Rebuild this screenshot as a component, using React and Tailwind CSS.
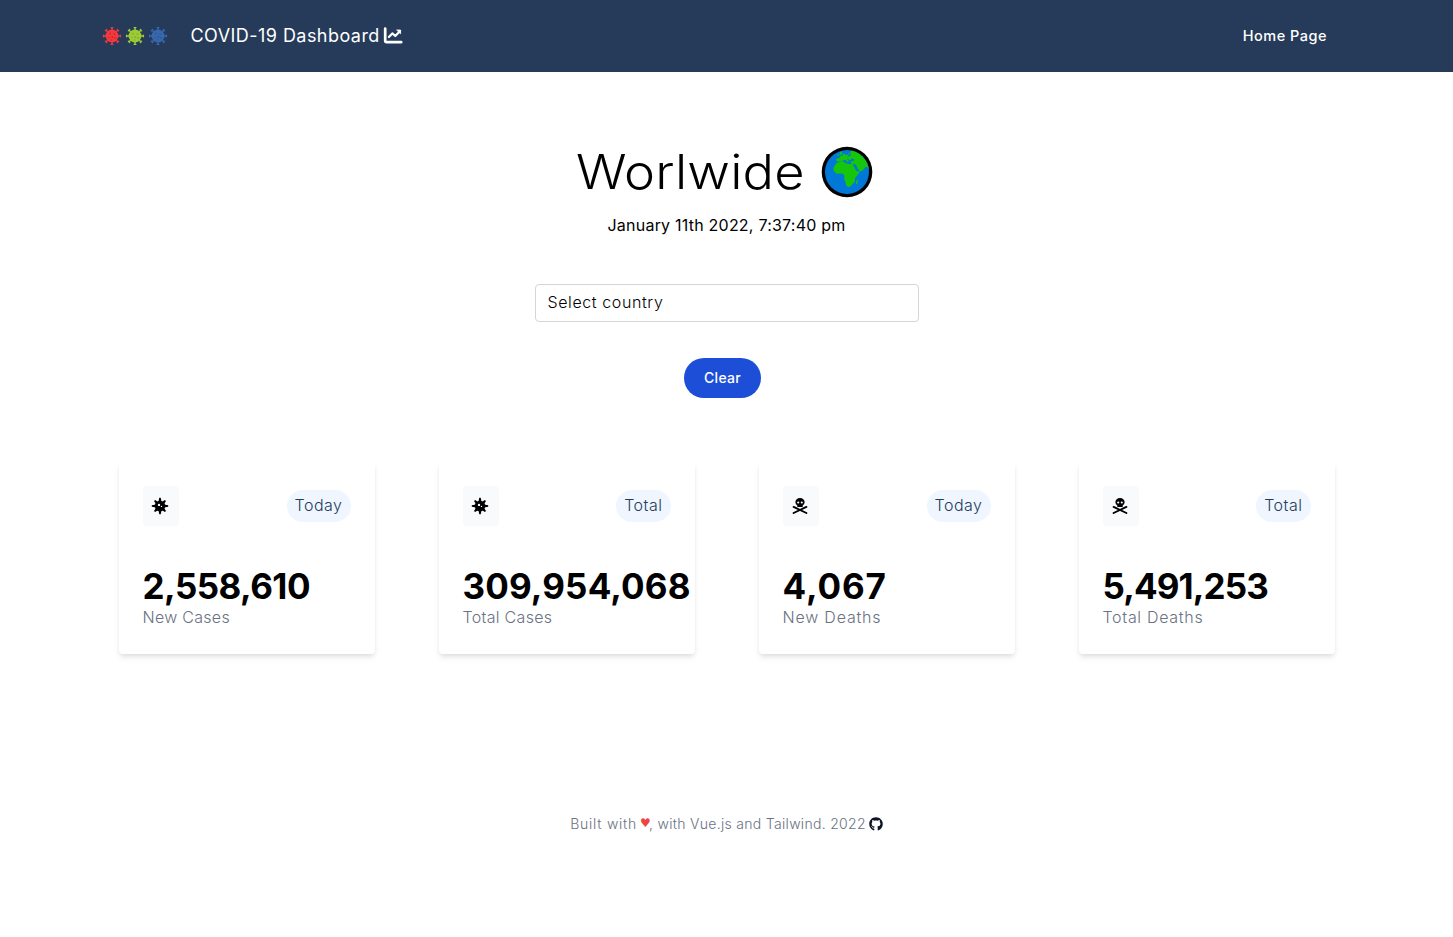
import React from "react";
import { FaGithub } from "react-icons/fa";

function LogoVirus({ color, dark }) {
  return (
    <svg viewBox="-0.5 -0.5 21 21" className="h-5 w-5">
      <g stroke={color} strokeWidth="1.5" strokeLinecap="round">
        {[0, 45, 90, 135, 180, 225, 270, 315].map((a) => (
          <path key={a} d="M10 5V1.4M9.1 1.2h1.8" transform={`rotate(${a} 10 10)`} />
        ))}
      </g>
      <circle cx="10" cy="10" r="6.8" fill={color} />
      <g fill={dark}>
        <circle cx="8" cy="7.5" r="1" />
        <circle cx="12.5" cy="8" r="0.9" />
        <circle cx="10.3" cy="11" r="1" />
        <circle cx="6.8" cy="11.5" r="0.8" />
        <circle cx="13.3" cy="12" r="1" />
        <circle cx="9.5" cy="14.2" r="0.8" />
      </g>
    </svg>
  );
}

function ChartIcon() {
  return (
    <svg viewBox="0 0 20 18" className="h-[18px] w-5" fill="none" stroke="white" strokeLinecap="round" strokeLinejoin="round">
      <path d="M2.2 1.7v12.1q0 1.4 1.4 1.4h14.6" strokeWidth="2.7" />
      <path d="M5.9 10l3.4-3.6 3 2.6 4.6-4.7" strokeWidth="2.2" />
      <path d="M14 3h3.6v3.4z" fill="white" strokeWidth="0.8" />
    </svg>
  );
}

function VirusIcon() {
  return (
    <svg viewBox="0 0 20 20" className="h-5 w-5">
      <g fill="black">
        {[0, 90, 180, 270].map((a) => (
          <path key={a} d="M8.4 6l.9-4.2h1.4l.9 4.2z" transform={`rotate(${a} 10 10)`} />
        ))}
        {[45, 135, 225, 315].map((a) => (
          <path key={a} d="M8.5 6l.7-3.7h1.6l.7 3.7z" transform={`rotate(${a} 10 10)`} />
        ))}
        <circle cx="10" cy="10" r="5.2" />
      </g>
      <circle cx="9" cy="8.9" r="1.2" fill="#f9fafb" />
      <circle cx="11.5" cy="10.4" r="0.7" fill="#f9fafb" />
    </svg>
  );
}

function SkullIcon() {
  return (
    <svg viewBox="0 0 20 20" className="h-5 w-5">
      <path d="M10 1.9c-2.7 0-4.6 1.8-4.6 4.2 0 1.5.7 2.6 1.9 3.3v1.6h5.4V9.4c1.2-.7 1.9-1.8 1.9-3.3 0-2.4-1.9-4.2-4.6-4.2z" fill="black" />
      <circle cx="8.2" cy="6.5" r="1.1" fill="#f9fafb" />
      <circle cx="11.8" cy="6.5" r="1.1" fill="#f9fafb" />
      <path d="M3.6 10.9l12.8 6.1M16.4 10.9L3.6 17" stroke="black" strokeWidth="1.9" strokeLinecap="round" />
    </svg>
  );
}

function Globe() {
  return (
    <svg viewBox="0 0 52 52" className="h-[52px] w-[52px]">
      <defs>
        <clipPath id="sea">
          <circle cx="26" cy="26" r="22" />
        </clipPath>
      </defs>
      <circle cx="26" cy="26" r="25.3" fill="black" />
      <circle cx="26" cy="26" r="22" fill="#0078d7" />
      <g fill="#16c60c" clipPath="url(#sea)">
        <path d="M12.3 22l3-4.7 3.5-1.6 4-.2 1.5 1.6 3.5.8 4 .2 1.7 3.6 2 3.5h3l-1 2.7-3.5 4-.2 4-2.3 1.8-1.5 2.6-2.5.8-2-1-1.3-5-1-2 .2-3.5-2-2-5.5.2-3-2.5z" />
        <path d="M15.500 15.200l-.2-2.600 3-.3 1-2.200 2.600-.6.2-1.600 2-.2.3 1.400 2.500-.4 1.500-2L30 5l3-3h9l11 13v12l-3.500.5-1.300-3.500-1.900-3-2.300.2-2.500 3.500-3 .8-2.500-4.500-1.200-2.600-4.600-.6-.5-2.200 3-.9.6-1.400-2.800-.7-1.600 2.100-1.700-1.600-1 .3 1.800 2.400-1 .8-2.500-2.700-2.200.3-1.500 1.600z" />
        <path d="M18.7 6.700l2.100-1.200.6 3-2.500.6zM16.500 8.300l1.500-.3v1.600l-1.600.2zM35.300 34.700l1.600-1.400-.5 4.400-1.500.4z" />
      </g>
      <path d="M28 8.500l1.500-2.300.6.5-1.100 2.300 1.600-.3-1.800 1.500-2.600.1z" fill="#0078d7" />
    </svg>
  );
}

const cards = [
  { Icon: VirusIcon, badge: "Today", value: "2,558,610", label: "New Cases", vt: "tracking-[-0.55px]", lt: "tracking-[0.28px]" },
  { Icon: VirusIcon, badge: "Total", value: "309,954,068", label: "Total Cases", vt: "tracking-[0.15px]", lt: "tracking-[0.3px]" },
  { Icon: SkullIcon, badge: "Today", value: "4,067", label: "New Deaths", vt: "tracking-[0.9px]", lt: "tracking-[0.8px]" },
  { Icon: SkullIcon, badge: "Total", value: "5,491,253", label: "Total Deaths", vt: "tracking-[-0.9px]", lt: "tracking-[0.7px]" },
];

export default function App() {
  return (
    <div className="min-h-[937px] bg-white font-['Inter',sans-serif] font-light text-black">
      <header className="flex h-[72px] items-center justify-between bg-[#253b59] pl-[102px] pr-[126px] text-white">
        <div className="flex items-center">
          <div className="flex gap-[3px]">
            <LogoVirus color="#ee3a41" dark="#f0181f" />
            <LogoVirus color="#9dcb35" dark="#82ad2c" />
            <LogoVirus color="#3768ad" dark="#2d5794" />
          </div>
          <span className="ml-[22.5px] text-[18px] font-normal leading-7 tracking-[0.45px]">COVID-19 Dashboard</span>
          <span className="ml-[3px]"><ChartIcon /></span>
        </div>
        <a className="text-[14.5px] font-medium tracking-[0.5px]">Home Page</a>
      </header>

      <main className="flex flex-col items-center">
        <div className="mr-[5px] mt-[74px] flex h-[52px] items-center">
          <h1 className="w-[245px] text-[48px] leading-none">
            <span className="inline-block origin-left scale-x-[1.09] tracking-[0.2px]">Worlwide</span>
          </h1>
          <Globe />
        </div>
        <p className="mt-[15px] text-base font-normal leading-6 tracking-[0.22px]">January 11th 2022, 7:37:40 pm</p>
        <div className="mt-[47px] flex h-[38px] w-96 items-center rounded border border-gray-300 px-3 pb-0.5 text-base tracking-[0.6px]">
          Select country
        </div>
        <button className="mr-2 mt-9 h-10 w-[77px] rounded-full bg-[#1d4ed8] text-sm font-medium tracking-[0.3px] text-white">
          Clear
        </button>

        <section className="mt-16 grid grid-cols-4 gap-16">
          {cards.map(({ Icon, badge, value, label, vt, lt }) => (
            <article key={label} className="h-48 w-64 rounded p-6 shadow-[0_4px_6px_-1px_rgba(0,0,0,0.1),0_2px_4px_-1px_rgba(0,0,0,0.06)]">
              <div className="flex items-center justify-between">
                <div className="flex h-10 w-9 items-center rounded bg-gray-50 pl-[7.5px]">
                  <Icon />
                </div>
                <span className="flex h-8 items-center rounded-full bg-[#eff6ff] px-2 pb-0.5 text-base tracking-[0.5px] text-[#253b59]">
                  {badge}
                </span>
              </div>
              <div className={`mt-10 whitespace-nowrap text-[35px] font-bold leading-10 ${vt}`}>{value}</div>
              <div className={`text-base leading-[22px] text-gray-500 ${lt}`}>{label}</div>
            </article>
          ))}
        </section>

        <footer className="mt-[160px] flex h-5 items-center text-sm text-gray-500">
          <span className="tracking-[0.75px]">Built with</span>
          <span className="ml-[3px] w-[9px] font-['DejaVu_Sans',sans-serif] text-[12px] font-normal text-[#ef4444]">♥</span>
          <span className="tracking-[0.3px]">, with Vue.js and Tailwind. 2022</span>
          <FaGithub className="ml-[3px] h-3.5 w-3.5 text-[#0b1324]" />
        </footer>
      </main>
    </div>
  );
}
